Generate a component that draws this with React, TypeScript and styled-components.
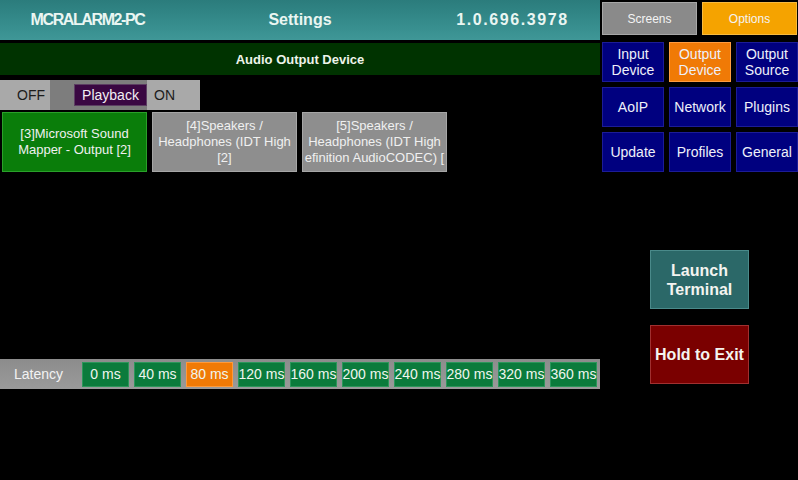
import styled, { createGlobalStyle } from "styled-components"

const GlobalStyle = createGlobalStyle`
    html, body {
        margin: 0;
        padding: 0;
        background: #000;
    }
    body {
        font-family: "Liberation Sans", Arial, sans-serif;
        width: 798px;
        height: 480px;
        overflow: hidden;
    }
`

const Screen = styled.div`
    display: flex;
    width: 798px;
    height: 480px;
    background: #000;
`

const LeftColumn = styled.div`
    width: 600px;
    display: flex;
    flex-direction: column;
`

const Header = styled.div`
    height: 40px;
    display: grid;
    grid-template-columns: 175px 250px 175px;
    align-items: center;
    background: linear-gradient(180deg, #2b7c7c 0%, #348a8a 50%, #3f9797 100%);
    color: #eaf6f2;
    font-weight: 700;
    font-size: 16px;
    text-align: center;
`

const HeaderItem = styled.div<{ $spacing: number }>`
    letter-spacing: ${p => p.$spacing}px;
`

const SectionBar = styled.div`
    margin-top: 3px;
    height: 32px;
    display: flex;
    align-items: center;
    justify-content: center;
    background: #003300;
    color: #eef4ea;
    font-weight: 700;
    font-size: 13px;
`

const Toggle = styled.div`
    margin-top: 5px;
    width: 200px;
    height: 30px;
    display: flex;
    align-items: center;
    background: #a9a9a9;
    color: #1c1c1c;
    font-size: 14px;
`

const ToggleLabel = styled.span<{ $width: number; $pad: number }>`
    width: ${p => p.$width}px;
    padding-left: ${p => p.$pad}px;
    box-sizing: border-box;
`

const Track = styled.div`
    display: flex;
    align-items: center;
    height: 30px;
    width: 97px;
    background: #7d7d7d;
    padding-left: 24px;
    box-sizing: border-box;
`

const Knob = styled.div`
    width: 73px;
    height: 22px;
    display: flex;
    align-items: center;
    justify-content: center;
    background: #3a0742;
    border: 1px solid #5c3e62;
    box-sizing: border-box;
    color: #f2eef4;
    font-size: 14px;
`

const DeviceRow = styled.div`
    margin-top: 2px;
    display: flex;
    gap: 5px;
    padding-left: 2px;
`

const DeviceButton = styled.div<{ $active?: boolean }>`
    width: 145px;
    height: 60px;
    box-sizing: border-box;
    display: flex;
    align-items: center;
    justify-content: center;
    text-align: center;
    overflow: hidden;
    white-space: nowrap;
    font-size: 13px;
    line-height: 16px;
    color: #f0f0f0;
    background: ${p => (p.$active ? "#0a7d0a" : "#8e8e8e")};
    border: 1px solid ${p => (p.$active ? "#2aa02a" : "#a6a6a6")};
`

const LatencyBar = styled.div`
    margin-top: 187px;
    height: 30px;
    display: flex;
    align-items: center;
    gap: 5px;
    background: linear-gradient(180deg, #8c8c8c 0%, #9a9a9a 100%);
`

const LatencyLabel = styled.div`
    width: 77px;
    text-align: center;
    color: #f2f2f2;
    font-size: 14px;
`

const LatencyButton = styled.div<{ $active?: boolean }>`
    width: 47px;
    height: 25px;
    box-sizing: border-box;
    display: flex;
    align-items: center;
    justify-content: center;
    white-space: nowrap;
    font-size: 14px;
    color: #f0f6f0;
    background: ${p => (p.$active ? "#f07a06" : "#0b7b3c")};
    border: 1px solid ${p => (p.$active ? "#ff9a3a" : "#2b965a")};
`

const RightColumn = styled.div`
    width: 198px;
    padding: 2px 0 0 2px;
    box-sizing: border-box;
    display: flex;
    flex-direction: column;
`

const Tabs = styled.div`
    display: flex;
    gap: 5px;
`

const Tab = styled.div<{ $bg: string }>`
    width: 95px;
    height: 33px;
    box-sizing: border-box;
    display: flex;
    align-items: center;
    justify-content: center;
    font-size: 12px;
    color: #f4f4f4;
    background: ${p => p.$bg};
    border: 1px solid rgba(255, 255, 255, 0.25);
`

const NavGrid = styled.div`
    margin-top: 7px;
    display: grid;
    grid-template-columns: repeat(3, 62px);
    grid-auto-rows: 40px;
    gap: 5px;
`

const NavButton = styled.div<{ $active?: boolean }>`
    box-sizing: border-box;
    display: flex;
    flex-direction: column;
    align-items: center;
    justify-content: center;
    text-align: center;
    font-size: 14px;
    line-height: 16px;
    color: #eef0fa;
    background: ${p => (p.$active ? "#f07a06" : "#00007f")};
    border: 1px solid ${p => (p.$active ? "#ff9c40" : "#1c1c96")};
`

const ActionButton = styled.div<{ $bg: string; $border: string; $top: number }>`
    margin: ${p => p.$top}px 0 0 48px;
    width: 99px;
    height: 59px;
    box-sizing: border-box;
    display: flex;
    align-items: center;
    justify-content: center;
    text-align: center;
    font-weight: 700;
    font-size: 16px;
    line-height: 19px;
    color: #f4f4f0;
    background: ${p => p.$bg};
    border: 1px solid ${p => p.$border};
`

const latencies = [0, 40, 80, 120, 160, 200, 240, 280, 320, 360]

const navItems = [
    ["Input", "Device"],
    ["Output", "Device"],
    ["Output", "Source"],
    ["AoIP"],
    ["Network"],
    ["Plugins"],
    ["Update"],
    ["Profiles"],
    ["General"],
]

export const App = () => {
    return (
        <>
            <GlobalStyle />
            <Screen>
                <LeftColumn>
                    <Header>
                        <HeaderItem $spacing={-1.4}>MCRALARM2-PC</HeaderItem>
                        <HeaderItem $spacing={0}>Settings</HeaderItem>
                        <HeaderItem $spacing={1.6}>1.0.696.3978</HeaderItem>
                    </Header>
                    <SectionBar>Audio Output Device</SectionBar>
                    <Toggle>
                        <ToggleLabel $width={50} $pad={17}>OFF</ToggleLabel>
                        <Track>
                            <Knob>Playback</Knob>
                        </Track>
                        <ToggleLabel $width={50} $pad={7}>ON</ToggleLabel>
                    </Toggle>
                    <DeviceRow>
                        <DeviceButton $active>
                            [3]Microsoft Sound<br />Mapper - Output [2]
                        </DeviceButton>
                        <DeviceButton>
                            [4]Speakers /<br />Headphones (IDT High<br />[2]
                        </DeviceButton>
                        <DeviceButton>
                            [5]Speakers /<br />Headphones (IDT High<br />efinition AudioCODEC) [
                        </DeviceButton>
                    </DeviceRow>
                    <LatencyBar>
                        <LatencyLabel>Latency</LatencyLabel>
                        {latencies.map(ms => (
                            <LatencyButton key={ms} $active={ms === 80}>{ms} ms</LatencyButton>
                        ))}
                    </LatencyBar>
                </LeftColumn>
                <RightColumn>
                    <Tabs>
                        <Tab $bg="#8a8a8a">Screens</Tab>
                        <Tab $bg="#f5a300">Options</Tab>
                    </Tabs>
                    <NavGrid>
                        {navItems.map((lines, i) => (
                            <NavButton key={i} $active={i === 1}>
                                {lines.map((l, j) => (
                                    <span key={j}>{l}</span>
                                ))}
                            </NavButton>
                        ))}
                    </NavGrid>
                    <ActionButton $bg="#2b6868" $border="#4a8a8a" $top={78}>
                        Launch<br />Terminal
                    </ActionButton>
                    <ActionButton $bg="#7a0000" $border="#a03030" $top={16}>
                        Hold to Exit
                    </ActionButton>
                </RightColumn>
            </Screen>
        </>
    )
}

export default App
